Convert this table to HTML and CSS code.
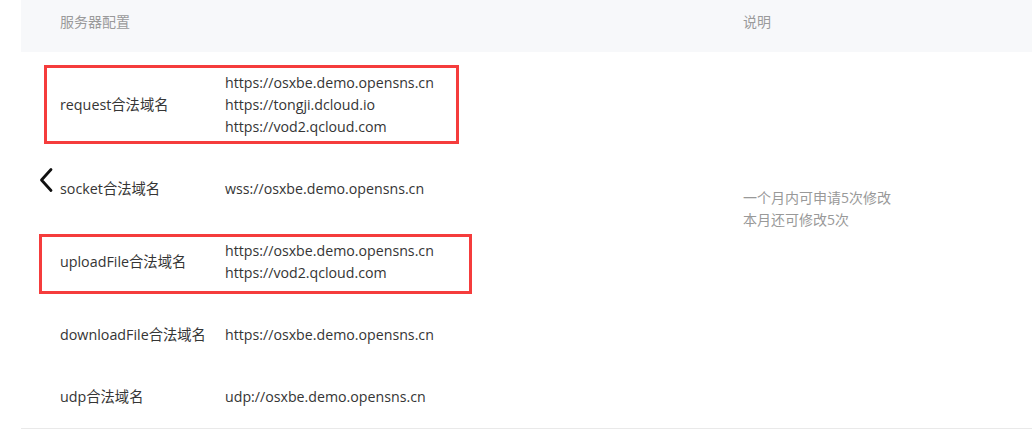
FILE: index.html
```html
<!DOCTYPE html>
<html lang="zh-CN">
<head>
<meta charset="utf-8">
<title>服务器配置</title>
<link rel="stylesheet" href="styles.css">
</head>
<body>
<div class="page">
  <div class="table">
    <div class="th th-label">服务器配置</div>
    <div class="th"></div>
    <div class="th th-desc">说明</div>

    <div class="cell label">request合法域名</div>
    <div class="cell value">https://osxbe.demo.opensns.cn<br>https://tongji.dcloud.io<br>https://vod2.qcloud.com</div>
    <div class="cell desc">一个月内可申请5次修改<br>本月还可修改5次</div>

    <div class="cell label">socket合法域名</div>
    <div class="cell value">wss://osxbe.demo.opensns.cn</div>

    <div class="cell label">uploadFile合法域名</div>
    <div class="cell value">https://osxbe.demo.opensns.cn<br>https://vod2.qcloud.com</div>

    <div class="cell label">downloadFile合法域名</div>
    <div class="cell value">https://osxbe.demo.opensns.cn</div>

    <div class="cell label">udp合法域名</div>
    <div class="cell value">udp://osxbe.demo.opensns.cn</div>
  </div>

  <div class="mark mark-1"></div>
  <div class="mark mark-2"></div>
  <svg class="back" width="14" height="26" viewBox="0 0 14 26" aria-hidden="true">
    <path d="M12 2.5 L2.5 13 L12 23.5" fill="none" stroke="#111" stroke-width="2.8" stroke-linecap="round" stroke-linejoin="round"/>
  </svg>
</div>
</body>
</html>
```

FILE: styles.css
```css
html, body {
  margin: 0;
  padding: 0;
  background: #ffffff;
}

body {
  font-family: "Open Sans", "Noto Sans CJK SC", sans-serif;
  font-size: 14px;
  color: #353535;
}

.page {
  position: relative;
  width: 1032px;
  height: 434px;
  overflow: hidden;
}

.table {
  margin-left: 21px;
  display: grid;
  grid-template-columns: 204px 518px 1fr;
  border-bottom: 1px solid #e9e9e9;
}

.th {
  background: #f7f8fa;
  height: 52px;
  box-sizing: border-box;
  padding-top: 11px;
  line-height: 22px;
  color: #9a9a9a;
  font-size: 14px;
}

.th-label {
  padding-left: 39px;
}

.cell {
  padding: 20px 0;
  line-height: 22px;
}

.label {
  padding-left: 39px;
  align-self: center;
  font-size: 14.3px;
}

.value {
  font-size: 14.2px;
}

.desc {
  grid-column: 3;
  grid-row: 2 / 6;
  align-self: center;
  color: #999999;
  font-size: 14px;
  padding: 0;
}

.mark {
  position: absolute;
  border: 3px solid #f53c3c;
  box-sizing: border-box;
}

.mark-1 {
  left: 44px;
  top: 65px;
  width: 415px;
  height: 79px;
}

.mark-2 {
  left: 39px;
  top: 234px;
  width: 433px;
  height: 60px;
}

.back {
  position: absolute;
  left: 39px;
  top: 167px;
}
```
